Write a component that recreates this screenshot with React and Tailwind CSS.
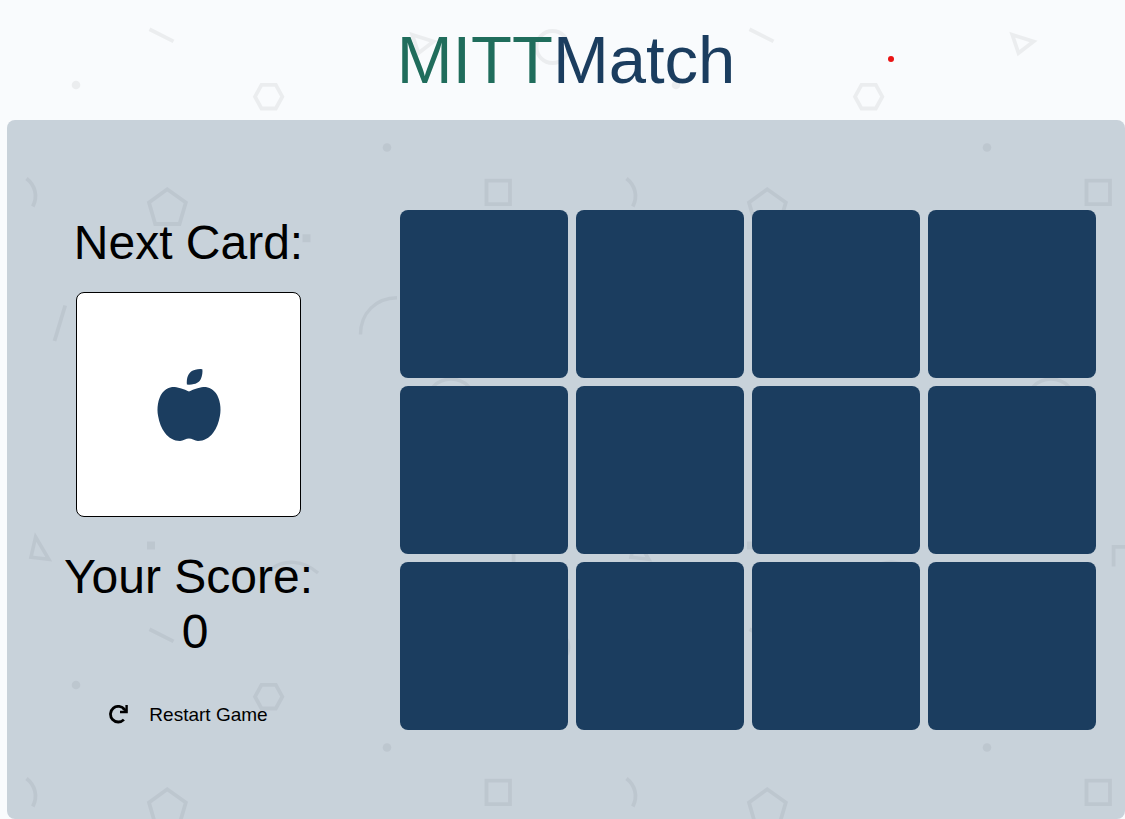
import React, { useState } from "react";
import { FaAppleAlt } from "react-icons/fa";

const CARDS = Array.from({ length: 12 }, (_, i) => i + 1);

function ShapesBackground() {
  return (
    <svg className="absolute inset-0 -z-10 h-full w-full" aria-hidden="true">
      <defs>
        <pattern id="shapes" width="600" height="600" patternUnits="userSpaceOnUse">
          <g fill="none" stroke="#000" strokeWidth="3.8">
            <path d="M149.5 29.2 173.5 41.4" />
            <path d="M261.5 84.9h14.3l6.5 11.8-6.5 11.8h-14.3l-6.5-11.8z" />
            <path d="M26.5 178.5c9 7 11.5 18 6.3 28" />
            <path d="M167.2 189.3 185.8 202.5 179.5 224H155.2L149 202.5z" />
            <path d="M65.2 305.5 54.5 341" />
            <path d="M360.5 334.5C360.5 313 376 298 397 297.8" strokeWidth="3.4" />
            <path d="M486.5 180.7h23.5v23.4h-23.5z" />
            <path d="M412.3 34.8 433.5 41.4 418.5 53z" />
            <circle cx="552.5" cy="47" r="16" />
            <circle cx="451" cy="403.5" r="24.5" strokeWidth="3.4" />
            <path d="M35.6 537 48.8 559.3 31 557.2z" strokeWidth="3.6" />
            <path d="M271 569c14-10 32-9 47 4" strokeWidth="3.4" />
            <path d="M513.6 566.5v-19.7h20" />
          </g>
          <g fill="#000">
            <circle cx="76" cy="85" r="4.3" />
            <circle cx="387" cy="147.5" r="4.3" />
            <path d="M302.5 234.2h8v8h-8zM147 541.5h8v8h-8z" />
          </g>
        </pattern>
      </defs>
      <rect width="100%" height="100%" fill="url(#shapes)" opacity="0.055" />
    </svg>
  );
}

function RestartIcon() {
  return (
    <svg viewBox="0 0 20 20" className="size-5" fill="none" stroke="currentColor" aria-hidden="true">
      <path d="M14.9 14.6A7.8 7.8 0 1 1 15.6 4.6" strokeWidth="2.8" />
      <path d="M17.6 0V7H11" strokeWidth="2.4" />
      <path d="M14 3 17.5 6.5" strokeWidth="2.4" />
    </svg>
  );
}

export default function App() {
  const [score, setScore] = useState(0);

  return (
    <div className="relative isolate flex min-h-screen flex-col bg-[#f9fbfd] pl-[7px] font-['Liberation_Sans',Arial,sans-serif] text-black">
      <ShapesBackground />

      <header className="relative py-[21px] text-center">
        <h1 className="text-[67px] leading-[78px] text-[#1b3d5f]">
          <span className="text-[#206d5c]">MITT</span>Match
        </h1>
        <span className="absolute top-14 right-[231px] size-1.5 rounded-full bg-[#ea1414]" />
      </header>

      <main className="grid flex-1 grid-cols-[363px_1fr] items-start rounded-lg bg-[#1b415f]/22 pt-[90px] pb-[89px]">
        <section className="flex flex-col items-center pt-[5px]">
          <h2 className="text-5xl leading-[55px]">Next Card:</h2>
          <div className="mt-[22px] flex size-[225px] items-center justify-center rounded-lg border border-black bg-white">
            <FaAppleAlt className="size-[72px] text-[#1b3d5f]" />
          </div>
          <p className="mt-8 text-center text-5xl leading-[55px]">
            Your Score:
            <br />
            &nbsp;{score}
          </p>
          <button
            type="button"
            onClick={() => setScore(0)}
            className="mt-[45px] flex items-center gap-5 text-[19px] leading-[22px]"
          >
            <RestartIcon />
            Restart Game
          </button>
        </section>

        <section className="grid grid-cols-4 gap-2 pr-[29px] pl-[30px]">
          {CARDS.map((n) => (
            <button
              key={n}
              type="button"
              aria-label={`Card ${n}`}
              className="aspect-square rounded-lg bg-[#1b3d5f]"
            />
          ))}
        </section>
      </main>
    </div>
  );
}
